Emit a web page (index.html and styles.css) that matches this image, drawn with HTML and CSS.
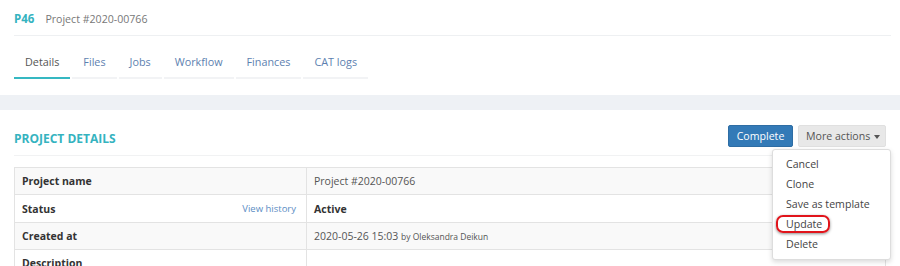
FILE: index.html
```html
<!DOCTYPE html>
<html lang="en">
<head>
  <meta charset="UTF-8">
  <title>P46 Project #2020-00766</title>
  <link rel="stylesheet" href="styles.css">
</head>
<body>
  <div class="top">
    <div class="page-head">
      <span class="code">P46</span>
      <span class="name">Project #2020-00766</span>
    </div>
    <ul class="tabs">
      <li class="active">Details</li>
      <li>Files</li>
      <li>Jobs</li>
      <li>Workflow</li>
      <li>Finances</li>
      <li>CAT logs</li>
    </ul>
  </div>

  <div class="band"></div>

  <div class="section">
    <div class="section-head">
      <h2>Project details</h2>
      <div class="actions">
        <button class="btn btn-primary">Complete</button>
        <button class="btn btn-default">More actions <span class="caret"></span></button>
        <!-- Open dropdown -->
        <ul class="dropdown">
          <li>Cancel</li>
          <li>Clone</li>
          <li>Save as template</li>
          <li><span class="marked">Update</span></li>
          <li>Delete</li>
        </ul>
      </div>
    </div>

    <table class="details">
      <tr>
        <th>Project name</th>
        <td>Project #2020-00766</td>
      </tr>
      <tr>
        <th><span>Status</span><a class="history">View history</a></th>
        <td class="strong">Active</td>
      </tr>
      <tr>
        <th>Created at</th>
        <td>2020-05-26 15:03 <small>by Oleksandra Deikun</small></td>
      </tr>
      <tr>
        <th>Description</th>
        <td></td>
      </tr>
    </table>
  </div>
</body>
</html>
```

FILE: styles.css
```css
/* Base */
body {
  margin: 0;
  height: 266px;
  font-family: "Open Sans", "Liberation Sans", sans-serif;
  font-size: 10.5px;
  color: #555;
  background: #fff;
  overflow: hidden;
}
ul {
  list-style: none;
  margin: 0;
  padding: 0;
}

/* Page header + tabs */
.top {
  padding: 0 9px 0 14px;
}
.page-head {
  display: flex;
  align-items: baseline;
  gap: 11px;
  height: 36px;
  box-sizing: border-box;
  padding-top: 11px;
  border-bottom: 1px solid #eef0f2;
}
.page-head .code {
  color: #35b3bf;
  font-weight: 700;
  font-size: 11.5px;
}
.page-head .name {
  color: #777;
  font-size: 10.6px;
}
.tabs {
  display: flex;
  gap: 2px;
  margin-top: 18px;
}
.tabs li {
  padding: 0 11px 8px;
  font-size: 10.8px;
  color: #5d7fb0;
  border-bottom: 2px solid #f2f3f5;
}
.tabs li.active {
  color: #555;
  border-bottom-color: #35b8c2;
}

/* Gray strip between blocks */
.band {
  height: 15px;
  margin-top: 16px;
  background: #eef1f5;
}

/* Project details */
.section {
  padding: 0 14px;
}
.section-head {
  display: flex;
  justify-content: space-between;
  align-items: center;
  padding: 15px 0 8px;
  border-bottom: 1px solid #f1f2f3;
}
.section-head h2 {
  margin: 4px 0 0;
  font-size: 12px;
  font-weight: 700;
  text-transform: uppercase;
  color: #35b3bf;
}
.actions {
  position: relative;
  display: flex;
  gap: 5px;
}
.btn {
  height: 22px;
  padding: 0 7px;
  font-family: inherit;
  font-size: 10.6px;
  white-space: nowrap;
  border-radius: 2px;
  border: 1px solid transparent;
}
.btn-primary {
  background: #337ab7;
  border-color: #2e6da4;
  color: #fff;
  width: 65px;
}
.btn-default {
  background: #e8e8e8;
  border-color: #e0e0e0;
  color: #555;
  width: 88px;
}
.caret {
  display: inline-block;
  width: 0;
  height: 0;
  margin-left: 1px;
  vertical-align: middle;
  border-top: 4px solid #555;
  border-left: 3.5px solid transparent;
  border-right: 3.5px solid transparent;
}

/* Dropdown menu over the table */
.dropdown {
  position: absolute;
  top: 24px;
  right: -5px;
  width: 119px;
  padding: 4px 0 5px;
  background: #fff;
  border: 1px solid #ddd;
  border-radius: 3px;
  box-shadow: 0 2px 5px rgba(0, 0, 0, 0.15);
  z-index: 10;
  box-sizing: border-box;
}
.dropdown li {
  padding: 0 13px;
  line-height: 20px;
  font-size: 10.6px;
  color: #444;
}
.marked {
  position: relative;
}
.marked::after {
  content: "";
  position: absolute;
  left: -10px;
  right: -8px;
  top: -2px;
  bottom: -2px;
  border: 2px solid #e1141b;
  border-radius: 7px;
  box-shadow: 0 1px 3px rgba(0, 0, 0, 0.45);
}

/* Details table */
.details {
  width: 100%;
  margin-top: 11px;
  border-collapse: collapse;
}
.details th,
.details td {
  height: 26.4px;
  padding: 0 7px;
  border: 1px solid #e3e3e3;
  text-align: left;
  vertical-align: middle;
}
.details th {
  width: 277px;
  font-weight: 700;
  color: #333;
}
.details tr:nth-child(odd) {
  background: #f9f9f9;
}
.details th span {
  float: left;
}
.history {
  float: right;
  margin-right: 3px;
  font-weight: 400;
  font-size: 9.5px;
  color: #5b8dc4;
}
.details td.strong {
  font-weight: 700;
  color: #333;
}
.details small {
  font-size: 8.5px;
}
```
